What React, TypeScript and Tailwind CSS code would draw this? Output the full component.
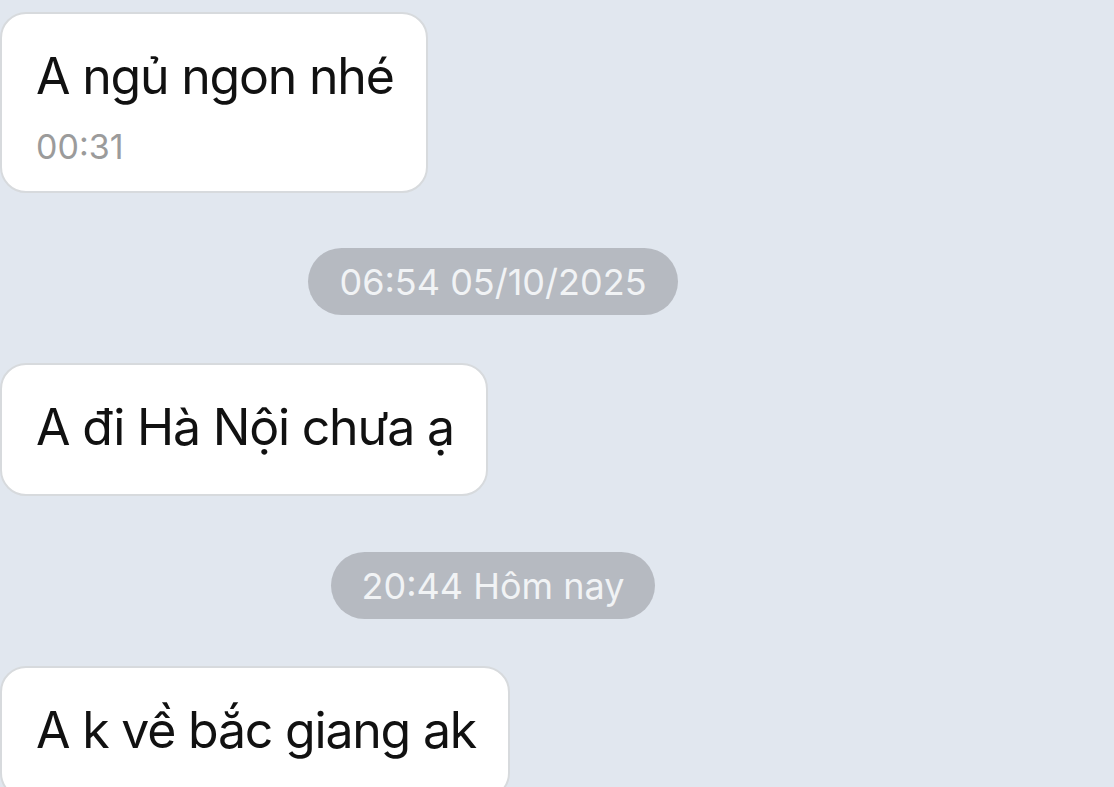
const Bubble = ({ text, time }: { text: string; time?: string }) => (
  <div
    className={`self-start rounded-[26px] border-2 border-[#d7dadd] bg-white pl-[34px] pr-[32px] pt-[34px] ${
      time ? 'pb-[26px]' : 'pb-[39px]'
    }`}
  >
    <p className="text-[50px] leading-[56px] tracking-[-1.2px] text-[#111111] whitespace-nowrap">{text}</p>
    {time && <p className="mt-[25px] text-[34px] leading-[36px] text-[#9b9b9b]">{time}</p>}
  </div>
);

const DatePill = ({ label }: { label: string }) => (
  <div className="self-center flex h-[67px] items-center rounded-full bg-[#b6bac1] px-[31px]">
    <span className="text-[36px] text-[#f1f3f5]">{label}</span>
  </div>
);

export default function App() {
  return (
    <div
      className="h-[787px] w-[1114px] overflow-hidden bg-[#e1e7ef]"
      style={{ fontFamily: 'Inter, "Noto Sans", sans-serif' }}
    >
      <div className="flex w-[986px] flex-col pt-[12px]">
        <Bubble text="A ngủ ngon nhé" time="00:31" />
        <div className="h-[55px]" />
        <DatePill label="06:54 05/10/2025" />
        <div className="h-[48px]" />
        <Bubble text="A đi Hà Nội chưa ạ" />
        <div className="h-[56px]" />
        <DatePill label="20:44 Hôm nay" />
        <div className="h-[47px]" />
        <Bubble text="A k về bắc giang ak" />
      </div>
    </div>
  );
}
